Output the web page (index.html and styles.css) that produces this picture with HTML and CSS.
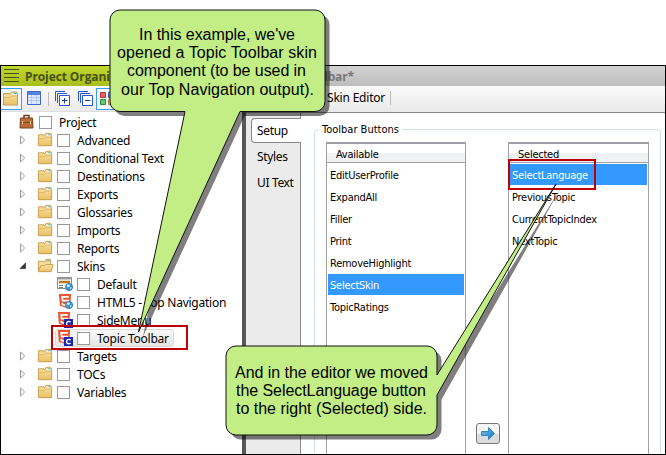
FILE: index.html
```
<!DOCTYPE html>
<html lang="en">
<head>
<meta charset="utf-8">
<title>Project Organizer</title>
<link rel="stylesheet" href="styles.css">
</head>
<body>
<svg class="defs" width="0" height="0">
  <defs>
    <linearGradient id="fold" x1="0" y1="0" x2="0" y2="1"><stop offset="0" stop-color="#fbe3a4"/><stop offset="1" stop-color="#e9c065"/></linearGradient>
    <linearGradient id="blue" x1="0" y1="0" x2="1" y2="1"><stop offset="0" stop-color="#73c8fa"/><stop offset="1" stop-color="#1672b8"/></linearGradient>
    <symbol id="folder" viewBox="0 0 18 16"><path d="M1.500 2.500h6l1 1.500 1-3h5l1 2v11h-14z" fill="url(#fold)" stroke="#c79c4c"/><path d="M9 3.500h6" stroke="#fff"/><path d="M12 2.500h2.500" stroke="#28b4ee"/><path d="M2 6.500h6l1.500-1.500h6" fill="none" stroke="#d7ad5c" stroke-width=".8"/></symbol>
    <symbol id="open" viewBox="0 0 18 16"><path d="M1.500 14V3h5l1 1 2-3h5v6" fill="#f6df9e" stroke="#c79c4c"/><path d="M10 2.500h2" stroke="#5db84e"/><path d="M12 2.500h2" stroke="#28b4ee"/><path d="M1.500 14L4 7.500h4l1-1h8l-2 7.500z" fill="url(#fold)" stroke="#c79c4c"/></symbol>
    <symbol id="html5" viewBox="0 0 16 16"><path d="M1 0h13l-1 12.500-5.500 2L2 12.500z" fill="#e9532d"/><path d="M11.500 3h-7l.4 4H11l-.5 4-3 1-2.800-1-.1-1.500" fill="none" stroke="#fff" stroke-width="1.800"/></symbol>
    <symbol id="globe" viewBox="0 0 8 8"><circle cx="4" cy="4" r="3.600" fill="url(#blue)" stroke="#1966a7" stroke-width=".7"/><path d="M2 2l2-.5L5 3 3.500 4 2 3.500zM5 4.500l1.500-.5v1.500L5 6.500z" fill="#d4f1ff"/></symbol>
    <symbol id="cbox" viewBox="0 0 9 9"><path d="M0 0h9v9H0z" fill="#1c26a8"/><path d="M6.500 3.200a2.200 2.200 0 1 0 0 2.700" fill="none" stroke="#fff" stroke-width="1.400"/></symbol>
    <symbol id="arrow" viewBox="0 0 8 10"><path d="M1.500 1v8L5.700 5z" fill="#fff" stroke="#999"/></symbol>
    <symbol id="down" viewBox="0 0 8 10"><path d="M6.500 2v5.500H1z" fill="#333" stroke="#222" stroke-width=".6"/></symbol>
  </defs>
</svg>
<main class="app">
  <section class="organizer">
    <header class="title green"><svg width="16" height="20"><path d="M1 3.500h15M1 7.500h15M1 11.500h15M1 15.500h15" stroke="#465012"/></svg><span>Project Organizer</span></header>
    <div class="tools">
      <span class="tool on"><svg width="18" height="16"><use href="#folder"/></svg></span>
      <span class="tool"><svg width="14" height="15"><path d="M.5.5h13v13H.5z" fill="#dce9ff" stroke="#3d67c8"/><path d="M1 1h12v3H1z" fill="#5983dc"/><path d="M1 6.500h12M1 9.500h12M4.500 4v9M9.500 4v9" stroke="#a9c2ef" stroke-width=".8"/></svg></span>
      <i class="sep"></i>
      <span class="tool"><svg width="16" height="16"><path d="M.5 10V.5H10M2.500 12V2.500H12" fill="none" stroke="#2b55d8"/><path d="M4.500 4.500h10v10h-10z" fill="#fff" stroke="#2b55d8"/><path d="M7 9.500h5.500M9.500 7v5.500" stroke="#173ca4"/></svg></span>
      <span class="tool"><svg width="16" height="16"><path d="M.5 10V.5H10M2.500 12V2.500H12" fill="none" stroke="#2b55d8"/><path d="M4.500 4.500h10v10h-10z" fill="#fff" stroke="#2b55d8"/><path d="M7 9.500h5.500" stroke="#173ca4"/></svg></span>
      <span class="tool on"><svg width="18" height="16"><path d="M2.500 1.500h5v5h-5z" fill="#e96060" stroke="#bd3434"/><path d="M2.500 8.500h5v5h-5z" fill="#64c774" stroke="#318c42"/><path d="M10.500 1.500h5v5h-5z" fill="#80a9ee" stroke="#315dbd"/><path d="M10.500 8.500h5v5h-5z" fill="#f0c96e" stroke="#b48527"/></svg></span>
    </div>
    <ul class="tree">
      <li class="root"><svg class="ico" width="16" height="16"><path d="M5 4V1.500h5V4" fill="none" stroke="#71391d" stroke-width="1.500"/><path d="M1.500 4h12l.5 10H1z" fill="#bd6c3b" stroke="#79401f"/><path d="M1 8.500h13" stroke="#7d4121"/><path d="M3.500 7v3M11.500 7v3" stroke="#ecd28a"/></svg><i class="check"></i><span>Project</span></li>
      <li><svg class="exp"><use href="#arrow"/></svg><svg class="ico"><use href="#folder"/></svg><i class="check"></i><span>Advanced</span></li>
      <li><svg class="exp"><use href="#arrow"/></svg><svg class="ico"><use href="#folder"/></svg><i class="check"></i><span>Conditional Text</span></li>
      <li><svg class="exp"><use href="#arrow"/></svg><svg class="ico"><use href="#folder"/></svg><i class="check"></i><span>Destinations</span></li>
      <li><svg class="exp"><use href="#arrow"/></svg><svg class="ico"><use href="#folder"/></svg><i class="check"></i><span>Exports</span></li>
      <li><svg class="exp"><use href="#arrow"/></svg><svg class="ico"><use href="#folder"/></svg><i class="check"></i><span>Glossaries</span></li>
      <li><svg class="exp"><use href="#arrow"/></svg><svg class="ico"><use href="#folder"/></svg><i class="check"></i><span>Imports</span></li>
      <li><svg class="exp"><use href="#arrow"/></svg><svg class="ico"><use href="#folder"/></svg><i class="check"></i><span>Reports</span></li>
      <li><svg class="exp"><use href="#down"/></svg><svg class="ico"><use href="#open"/></svg><i class="check"></i><span>Skins</span></li>
      <li class="leaf"><svg class="ico"><path d="M.5 1.500h14v11H.5z" fill="#fff" stroke="#8b8b8b"/><path d="M0 2.500h15" stroke="#999" stroke-width="2"/><path d="M2 6h11" stroke="#bf751e" stroke-width="2.500"/><path d="M2 9.500h4M2 11.500h4" stroke="#777"/><use href="#globe" x="8" y="7" width="8" height="8"/></svg><i class="check"></i><span>Default</span></li>
      <li class="leaf"><svg class="ico"><use href="#html5" x="1" width="15" height="15"/><use href="#globe" x="8" y="7" width="8" height="8"/></svg><i class="check"></i><span>HTML5 - Top Navigation</span></li>
      <li class="leaf"><svg class="ico"><use href="#html5" width="15" height="15"/><use href="#cbox" x="7" y="7" width="9" height="9"/></svg><i class="check"></i><span>SideMenu</span></li>
      <li class="leaf picked"><svg class="ico"><use href="#html5" width="15" height="15"/><use href="#cbox" x="7" y="7" width="9" height="9"/></svg><i class="check"></i><span>Topic Toolbar</span></li>
      <li><svg class="exp"><use href="#arrow"/></svg><svg class="ico"><use href="#folder"/></svg><i class="check"></i><span>Targets</span></li>
      <li><svg class="exp"><use href="#arrow"/></svg><svg class="ico"><use href="#folder"/></svg><i class="check"></i><span>TOCs</span></li>
      <li><svg class="exp"><use href="#arrow"/></svg><svg class="ico"><use href="#folder"/></svg><i class="check"></i><span>Variables</span></li>
    </ul>
  </section>
  <section class="editor">
    <header class="title gray"><span>olbar*</span></header>
    <div class="bar"><span>Skin Editor</span><i class="sep"></i></div>
    <div class="work">
      <nav class="tabs"><a class="active">Setup</a><a>Styles</a><a>UI Text</a></nav>
      <div class="page">
        <fieldset>
          <legend>Toolbar Buttons</legend>
          <div class="columns">
            <div class="list"><h2>Available</h2><p>EditUserProfile</p><p>ExpandAll</p><p>Filler</p><p>Print</p><p>RemoveHighlight</p><p class="sel">SelectSkin</p><p>TopicRatings</p></div>
            <div class="move"><button aria-label="Move right"><svg width="14" height="13"><path d="M.5 4.500h7v-4l6 6-6 6v-4h-7z" fill="url(#blue)" stroke="#3487bd"/></svg></button></div>
            <div class="list"><h2>Selected</h2><p class="sel">SelectLanguage</p><p>PreviousTopic</p><p>CurrentTopicIndex</p><p>NextTopic</p></div>
          </div>
        </fieldset>
      </div>
    </div>
  </section>
</main>
<svg class="notes" width="666" height="455" viewBox="0 0 666 455">
  <g fill="none" stroke="#c00000" stroke-width="2"><path d="M52 326h135v23H52z"/><path d="M509 160h86v29h-86z"/></g>
  <g fill="#000" fill-opacity=".5" transform="translate(4.500 4.500)"><path d="M120 10H315a10 10 0 0 1 10 10V101.500a10 10 0 0 1-10 10H240L138.500 332 185 111.500H120a10 10 0 0 1-10-10V20a10 10 0 0 1 10-10z"/><path d="M236 346H427a10 10 0 0 1 10 10V375L556 184 437 395V425a10 10 0 0 1-10 10H236a10 10 0 0 1-10-10V356a10 10 0 0 1 10-10z"/></g>
  <g fill="#c2ee85" stroke="#111" stroke-linejoin="bevel"><path d="M120 10H315a10 10 0 0 1 10 10V101.500a10 10 0 0 1-10 10H240L138.500 332 185 111.500H120a10 10 0 0 1-10-10V20a10 10 0 0 1 10-10z"/><path d="M236 346H427a10 10 0 0 1 10 10V375L556 184 437 395V425a10 10 0 0 1-10 10H236a10 10 0 0 1-10-10V356a10 10 0 0 1 10-10z"/></g>
  <g class="say">
    <text x="139" y="40" textLength="156">In this example, we've</text>
    <text x="117" y="58" textLength="200">opened a Topic Toolbar skin</text>
    <text x="127" y="76" textLength="179">component (to be used in</text>
    <text x="121" y="95" textLength="193">our Top Navigation output).</text>
    <text x="235" y="378" textLength="193">And in the editor we moved</text>
    <text x="236" y="396" textLength="190">the SelectLanguage button</text>
    <text x="236" y="414" textLength="191">to the right (Selected) side.</text>
  </g>
</svg>
</body>
</html>
```
FILE: styles.css
```
* { box-sizing: border-box; }
body { margin: 0; width: 666px; height: 455px; padding-top: 65px; overflow: hidden; background: #fff; color: #000; font: 12px "Noto Sans", sans-serif; position: relative; }
.defs { position: absolute; }
.app { display: flex; height: 390px; border: 1px solid #000; overflow: hidden; }
.organizer { width: 241px; overflow: hidden; flex: none; }
.title { display: flex; align-items: center; height: 20px; font: bold 12px "Open Sans", sans-serif; white-space: nowrap; }
.green { background: linear-gradient(#bfd62f, #a9bf1d); color: #475013; gap: 6px; padding-left: 2px; letter-spacing: -.1px; }
.tools { display: flex; align-items: center; height: 26px; background: linear-gradient(#fbfbfb, #ebebee); border-bottom: 1px solid #ddd; }
.tool { width: 23px; height: 22px; display: flex; align-items: center; justify-content: center; flex: none; }
.tool.on { border: 1px solid #3c9cf0; width: 22px; background: #f2f8ff; margin-left: -1px; }
.sep { width: 1px; height: 14px; background: #bbb; margin: 0 2px 0 3px; }
.tree { list-style: none; margin: 0; padding: 1px 0 0; }
.tree li { display: flex; align-items: center; height: 18px; padding-left: 18px; white-space: nowrap; letter-spacing: -.25px; }
.tree .root { padding-left: 18px; }
.tree .root .ico { width: 16px; margin-right: 4px; }
.exp { width: 8px; height: 10px; margin-right: 10px; flex: none; }
.ico { width: 17px; height: 16px; margin-right: 3px; flex: none; }
.check { width: 13px; height: 13px; border: 1px solid #999; background: #fff; margin-right: 7px; flex: none; }
.tree .leaf { padding-left: 56px; }
.tree .picked { width: 119px; margin-left: 54px; padding-left: 2px; border: 1px solid #d9d9d9; border-radius: 3px; background: linear-gradient(#f9f9f9, #e6e6e6); }
.picked .ico { margin-left: -1px; }
.editor { flex: 1; border-left: 4px solid #585858; display: flex; flex-direction: column; }
.gray { background: linear-gradient(#d2d2d2, #bdbdbd); color: #777; padding-left: 71px; letter-spacing: -.2px; flex: none; }
.bar { display: flex; align-items: center; height: 27px; flex: none; padding-left: 81px; gap: 2px; letter-spacing: -.2px; background: linear-gradient(#fbfbfb, #e9e9e9); border-bottom: 1px solid #888; padding-bottom: 3px; }
.work { display: flex; flex: 1; min-height: 0; }
.tabs { width: 55px; background: #ebebeb; border-right: 1px solid #888; padding: 5px 0 0 5px; flex: none; }
.tabs a { display: flex; align-items: center; height: 26px; padding-left: 6px; letter-spacing: -.35px; }
.tabs .active { width: 50px; height: 25px; background: #fff; border: 1px solid #888; border-right: 0; border-radius: 4px 0 0 4px; padding-left: 5px; position: relative; }
.page { flex: 1; padding: 9px 4px 0 13px; }
fieldset { margin: 0; height: 360px; border: 1px solid #d5dfe8; border-radius: 4px; padding: 5px 11px 0; min-width: 0; }
legend { padding: 0 3px; margin-left: -7px; font: 11px/15px "DejaVu Sans Condensed", sans-serif; }
.columns { display: flex; font: 11px "DejaVu Sans Condensed", sans-serif; letter-spacing: -.25px; }
.list { width: 140px; height: 340px; border: 1px solid #a0a0a8; padding: 0 1px; flex: none; }
.list:last-child { width: 141px; }
.list h2 { margin: 0 -1px 1px; height: 20px; font: inherit; line-height: 21px; padding-left: 9px; border-top: 1px solid #a0a0a8; border-bottom: 1px solid #a0a0a8; background: linear-gradient(#fff 50%, #f1f2f4 51%); }
.list p { margin: 0 0 1px; height: 21px; line-height: 23px; padding-left: 2px; }
.list .sel { background: #3399ff; color: #fff; }
.move { width: 42px; padding: 281px 0 0 10px; flex: none; }
.move button { width: 24px; height: 21px; padding: 0; border: 1px solid #777; border-radius: 3px; background: linear-gradient(#f4f4f4 50%, #dcdcdc 51%); display: flex; align-items: center; justify-content: center; }
.notes { position: absolute; left: 0; top: 0; }
.say { font: 16px "Liberation Sans", sans-serif; fill: #000; }
```
